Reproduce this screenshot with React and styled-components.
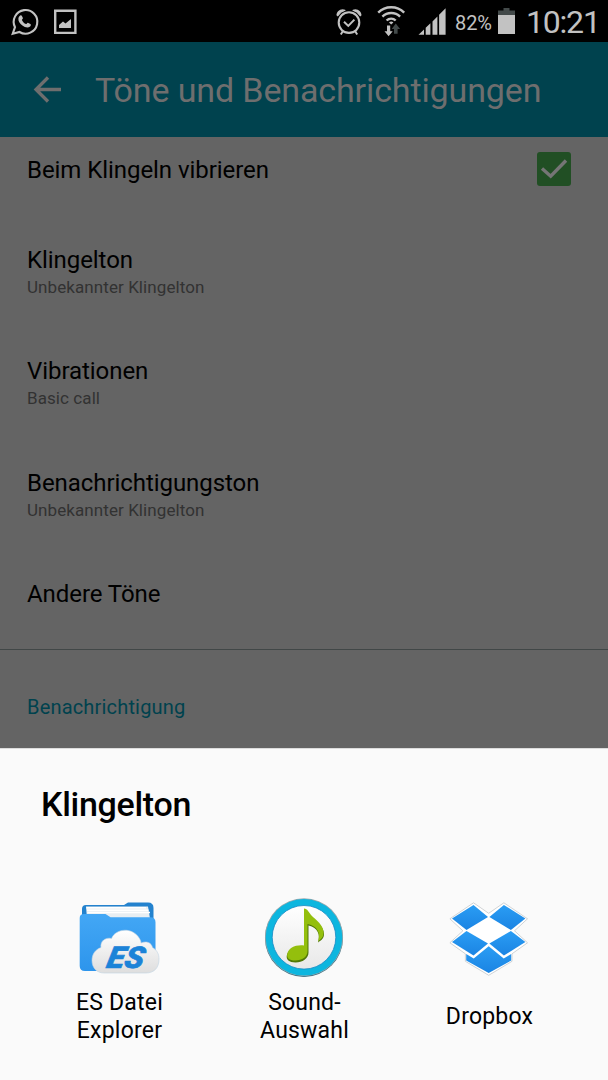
import React from "react";
import styled, { createGlobalStyle } from "styled-components";

const GlobalStyle = createGlobalStyle`
  * {
    box-sizing: border-box;
  }
  body {
    margin: 0;
    background: #646464;
    font-family: Roboto, "Liberation Sans", sans-serif;
  }
`;

//css styled elements
const Screen = styled.div`
  width: 608px;
  height: 1080px;
  display: flex;
  flex-direction: column;
  overflow: hidden;
  background: #646464;
`;
const StatusBar = styled.div`
  flex: none;
  height: 42px;
  display: flex;
  justify-content: space-between;
  background: #000;
  color: #c2c2c2;

  svg {
    display: block;
    flex: none;
  }
`;
const StatusGroup = styled.div`
  display: flex;
`;
const Battery = styled.span`
  width: 42px;
  margin-left: -1px;
  font-size: 20px;
  line-height: 46px;
  letter-spacing: -0.1px;
  white-space: nowrap;
`;
const Clock = styled.span`
  width: 82px;
  font-size: 32px;
  line-height: 45px;
  letter-spacing: -1.2px;
  white-space: nowrap;
`;
const Header = styled.header`
  flex: none;
  height: 95px;
  display: flex;
  align-items: center;
  padding-left: 32px;
  background: #00424e;
  color: #6e6e6e;
`;
const HeaderTitle = styled.h1`
  margin: 1px 0 0 32px;
  font-size: 34px;
  font-weight: 400;
  line-height: 44px;
  letter-spacing: -0.12px;
  white-space: nowrap;
`;
const Settings = styled.main`
  flex: none;
  height: 611px;
`;
const Row = styled.div`
  display: flex;
  justify-content: space-between;
  height: ${(props) => props.$height}px;
  padding: ${(props) => props.$top}px 37px 0 27px;
`;
const RowTitle = styled.div`
  color: #000;
  font-size: 24px;
  line-height: 32px;
  letter-spacing: -0.06px;
`;
const RowSummary = styled.div`
  color: #323232;
  font-size: 17px;
  line-height: 22px;
  letter-spacing: 0.08px;
`;
const SectionTitle = styled.h2`
  margin: 0;
  padding: 43px 27px 0;
  border-top: 1px solid #414747;
  color: #00424e;
  font-size: 20px;
  font-weight: 400;
  line-height: 28px;
  letter-spacing: 0.18px;
`;
const Checkbox = styled.div`
  width: 34px;
  height: 34px;
  margin-top: -2px;
  border-radius: 3px;
  background: #214f24;
`;
const Sheet = styled.section`
  flex: none;
  height: 332px;
  border-top: 1px solid #dcdcdc;
  background: #fafafa;
  color: #000;
`;
const SheetTitle = styled.h2`
  margin: 0;
  padding: 35px 41px 0;
  font-size: 34px;
  font-weight: 500;
  line-height: 40px;
  letter-spacing: -0.3px;
`;
const AppList = styled.div`
  display: grid;
  grid-template-columns: repeat(3, 185px);
  padding: 68px 0 0 26px;
`;
const AppItem = styled.div`
  display: flex;
  flex-direction: column;
  align-items: center;
`;
const AppLabel = styled.div`
  height: 55px;
  margin-top: 7px;
  padding-left: 2px;
  display: flex;
  align-items: center;
  text-align: center;
  font-size: 23px;
  line-height: 28px;
  letter-spacing: 0.2px;
  white-space: pre-line;
`;

function ChatIcon() {
  return (
    <svg width="42" height="42" viewBox="0 0 42 42">
      <path
        d="M12.7 33.8 15 27.2A11.8 11.8 0 1 1 19.5 32Z"
        fill="none"
        stroke="#c2c2c2"
        strokeWidth="2.1"
      />
      <path
        d="M20 15.7c.8-.7 1.5-.6 1.9.2l1 2.2c.2.6-.9 1.4-1 1.9.8 2 2.3 3.3 4.1 4.1.7-.1 1.2-1.6 1.9-1.4l2.5 1.2c.8.5.3 2.1-.3 2.7-2.2 1.8-5.2.9-7.7-1-2.6-2-4.3-4.6-4-7.1.1-1.2.7-2.2 1.6-2.8Z"
        fill="#c2c2c2"
      />
    </svg>
  );
}

function PictureIcon() {
  return (
    <svg width="42" height="42" viewBox="42 0 42 42">
      <path
        d="M55.2 10.7h20.2v22.2H55.2z"
        fill="none"
        stroke="#c2c2c2"
        strokeWidth="2.4"
      />
      <path d="M59 28v-3l4-3.5 2.5 2L71 19v9Z" fill="#c2c2c2" />
    </svg>
  );
}

function AlarmIcon() {
  return (
    <svg width="42" height="42" viewBox="332 0 42 42">
      <path
        d="M336.6 15.6c-.7-3.7 4.2-8 8.5-5.9l.6 1-7.8 5.9Zm24.8 0c.7-3.7-4.2-8-8.5-5.9l-.6 1 7.8 5.9Z"
        fill="#c2c2c2"
      />
      <circle cx="349" cy="22.6" r="12.4" fill="#000" />
      <g fill="none" stroke="#c2c2c2">
        <circle cx="349" cy="22.6" r="10.3" strokeWidth="2.1" />
        <path d="m344 21.7 4.3 4.2 6.1-6.3" strokeWidth="2" />
        <path d="m343 31-2.2 3.5M355 31l2.2 3.5" strokeWidth="2" />
      </g>
    </svg>
  );
}

function WifiIcon() {
  return (
    <svg width="42" height="42" viewBox="374 0 42 42">
      <g fill="none" stroke="#c2c2c2" strokeWidth="2.4">
        <path d="M378.2 12.6a18.5 18.5 0 0 1 26 0" />
        <path d="M382.4 16.6a12.5 12.5 0 0 1 17.7 0" />
        <path d="M386.600 20.500a6.500 6.500 0 0 1 9.100 0" />
      </g>
      <path d="m389 22.500 2.200 2.100 2.200-2.100q-2.200-1.800-4.400 0Z" fill="#c2c2c2" />
      <path d="M387 25.500h3.200v5.700h2.500l-4.100 5.100-4.100-5.100h2.500Z" fill="#c2c2c2" />
      <path d="M394 33.800h3.600v-4.700h2.500l-4.300-5.500-4.100 5.500h2.300Z" fill="#434a4a" />
    </svg>
  );
}

function SignalIcon() {
  return (
    <svg width="40" height="42" viewBox="416 0 40 42">
      <path
        d="M418.5 34.8 424 29.5v5.3Zm7.2 0v-7l4.7-4.6v11.6Zm6.8 0V21.4l4.9-5v18.4Zm6.6 0V14.8l6.5-6.5v26.5Z"
        fill="#c2c2c2"
      />
    </svg>
  );
}

function BatteryIcon() {
  return (
    <svg width="29" height="42" viewBox="497 0 29 42">
      <path d="M503.500 8h6v2.400h5.500V15h-17v-4.600h5.500Z" fill="#434a4a" />
      <path d="M498 15h17v19h-17z" fill="#c2c2c2" />
    </svg>
  );
}

function BackIcon() {
  return (
    <svg width="31" height="30" viewBox="32 75 31 30">
      <path
        d="M48 77.5 36 89.5l12 12M36 89.5h25"
        fill="none"
        stroke="currentColor"
        strokeWidth="3.3"
      />
    </svg>
  );
}

function CheckIcon() {
  return (
    <svg width="34" height="34" viewBox="0 0 34 34">
      <path
        d="m5 16.5 8.7 7.7L29 8.5"
        fill="none"
        stroke="#757575"
        strokeWidth="3.4"
      />
    </svg>
  );
}

function ExplorerIcon() {
  return (
    <svg width="90" height="90" viewBox="74 892 90 90">
      <defs>
        <linearGradient id="folder" x1="0" y1="0" x2="0" y2="1">
          <stop offset="0" stopColor="#43a7f5" />
          <stop offset="1" stopColor="#2d95ec" />
        </linearGradient>
        <linearGradient id="cloud" x1="0" y1="0" x2="0" y2="1">
          <stop offset="0" stopColor="#fff" />
          <stop offset="1" stopColor="#dedede" />
        </linearGradient>
      </defs>
      <path
        d="M82 918v-9q0-4 4-4h38l4-2.500h20q5.500 0 5.500 5.500v12Z"
        fill="#2382ce"
      />
      <path d="M86 906.500h62l2 12H87Z" fill="#e8eef2" />
      <path
        d="M86.500 907.800H146M87 910.200h61.500M87.500 912.600H150"
        stroke="#fff"
        strokeWidth="1.5"
      />
      <path
        d="M84 914h21.500l5 3.300H150q5.500 0 5.500 5V966q0 5-5 5H85q-5.300 0-5.300-5v-48q0-4 4.300-4Z"
        fill="url(#folder)"
      />
      <path
        d="M104 973c-7.500 0-12-5.500-12-12.500 0-6.500 3.500-11 9-13-1-6.500 4.500-10.500 10.500-9 4-10 21-12 28 0 1 1.700 1.500 3 1.500 4.500 6-2.500 10.500 0 11.500 4.500 4.500 2.500 6.500 6.500 6.500 11.500 0 9-5 14-13 14Z"
        fill="url(#cloud)"
        stroke="#bfd3e2"
        strokeWidth=".6"
      />
      <text
        x="0"
        y="0"
        transform="translate(105.500 968) skewX(-12)"
        fill="#1b83d8"
        stroke="#1b83d8"
        strokeWidth=".6"
        fontFamily="Roboto"
        fontSize="30"
        fontStyle="italic"
        fontWeight="900"
        textLength="37"
        lengthAdjust="spacingAndGlyphs"
      >
        ES
      </text>
    </svg>
  );
}

function NoteIcon() {
  return (
    <svg width="90" height="90" viewBox="259 892 90 90">
      <defs>
        <linearGradient id="disc" x1="0" y1="0" x2="0" y2="1">
          <stop offset="0" stopColor="#fff" />
          <stop offset="1" stopColor="#e8e8e8" />
        </linearGradient>
      </defs>
      <circle cx="304" cy="938" r="39" fill="#356c80" />
      <circle cx="304" cy="937.2" r="39" fill="#9aa9ae" />
      <circle cx="304" cy="937.3" r="38.3" fill="#0db6df" />
      <circle
        cx="304"
        cy="937.3"
        r="31.8"
        fill="url(#disc)"
        stroke="#1689c4"
        strokeWidth=".8"
      />
      <path
        d="M304 909.5c3.5.2 4.5 3.5 7 6.5 5 5 13 10 13 17.5 0 4.5-2.5 6-6 8.5 2.5-8 0-14.5-9.5-17v27c0 6-6 10-13 10-6.5 0-9.5-3-8.700-7 1.200-6 8.700-9.500 17.200-8.500Z"
        fill="#517806"
        transform="translate(0 .5)"
      />
      <path
        d="M304 908.5c3.5.2 4.5 3.5 7 6.5 5 5 12.5 10 12.5 17.5 0 4.5-2 6.5-5.300 8.500 2.300-8-.2-14.500-10.700-17v27c0 6-5.500 9.500-12 9.500-6.500 0-9-2.500-8.200-6.500 1.200-6 8.200-9.500 16.700-8.500Z"
        fill="#94bf0d"
      />
    </svg>
  );
}

function DropboxIcon() {
  return (
    <svg width="90" height="90" viewBox="444 892 90 90">
      <defs>
        <linearGradient id="box" x1="0" y1="0" x2="0" y2="1">
          <stop offset="0" stopColor="#2a9df4" />
          <stop offset="1" stopColor="#1b84e3" />
        </linearGradient>
      </defs>
      <path
        d="m473.500 902.500 15.200 10.500 15.200-10.500 23.600 16-13 12 13 12-15.500 11v7.500L488.700 975l-23.300-14v-7.500l-15.500-11 13-12-13-12Z"
        fill="#fff"
        stroke="#c4c8ca"
        strokeWidth=".8"
        transform="translate(0 .3)"
      />
      <g fill="url(#box)">
        <path d="m473.500 905 14.500 12-21.500 13-14.500-11.500Z" />
        <path d="m503.900 905-14.500 12 21.500 13 14.500-11.500Z" />
        <path d="m466.500 931 21.500 12.500-14.500 12-21.500-13.500Z" />
        <path d="m510.900 931-21.500 12.500 14.500 12 21.500-13.500Z" />
        <path d="m488.700 946.300-15 12.200-7.500-4.500v6.500l22.500 12.500 22.500-12.500V954l-7.500 4.500Z" />
      </g>
    </svg>
  );
}

const rows = [
  { title: "Klingelton", summary: "Unbekannter Klingelton", height: 111 },
  { title: "Vibrationen", summary: "Basic call", height: 112 },
  { title: "Benachrichtigungston", summary: "Unbekannter Klingelton", height: 111 },
  { title: "Andere Töne", height: 99 },
];

const apps = [
  { label: "ES Datei\nExplorer", Icon: ExplorerIcon },
  { label: "Sound-\nAuswahl", Icon: NoteIcon },
  { label: "Dropbox", Icon: DropboxIcon },
];

function App() {
  return (
    <Screen>
      <GlobalStyle />
      <StatusBar>
        <StatusGroup>
          <ChatIcon />
          <PictureIcon />
        </StatusGroup>
        <StatusGroup>
          <AlarmIcon />
          <WifiIcon />
          <SignalIcon />
          <Battery>82%</Battery>
          <BatteryIcon />
          <Clock>10:21</Clock>
        </StatusGroup>
      </StatusBar>
      <Header>
        <BackIcon />
        <HeaderTitle>Töne und Benachrichtigungen</HeaderTitle>
      </Header>
      <Settings>
        <Row $height={79} $top={17}>
          <RowTitle>Beim Klingeln vibrieren</RowTitle>
          <Checkbox>
            <CheckIcon />
          </Checkbox>
        </Row>
        {rows.map((row) => (
          <Row key={row.title} $height={row.height} $top={28}>
            <div>
              <RowTitle>{row.title}</RowTitle>
              {row.summary && <RowSummary>{row.summary}</RowSummary>}
            </div>
          </Row>
        ))}
        <SectionTitle>Benachrichtigung</SectionTitle>
      </Settings>
      <Sheet>
        <SheetTitle>Klingelton</SheetTitle>
        <AppList>
          {apps.map(({ label, Icon }) => (
            <AppItem key={label}>
              <Icon />
              <AppLabel>{label}</AppLabel>
            </AppItem>
          ))}
        </AppList>
      </Sheet>
    </Screen>
  );
}

export default App;
